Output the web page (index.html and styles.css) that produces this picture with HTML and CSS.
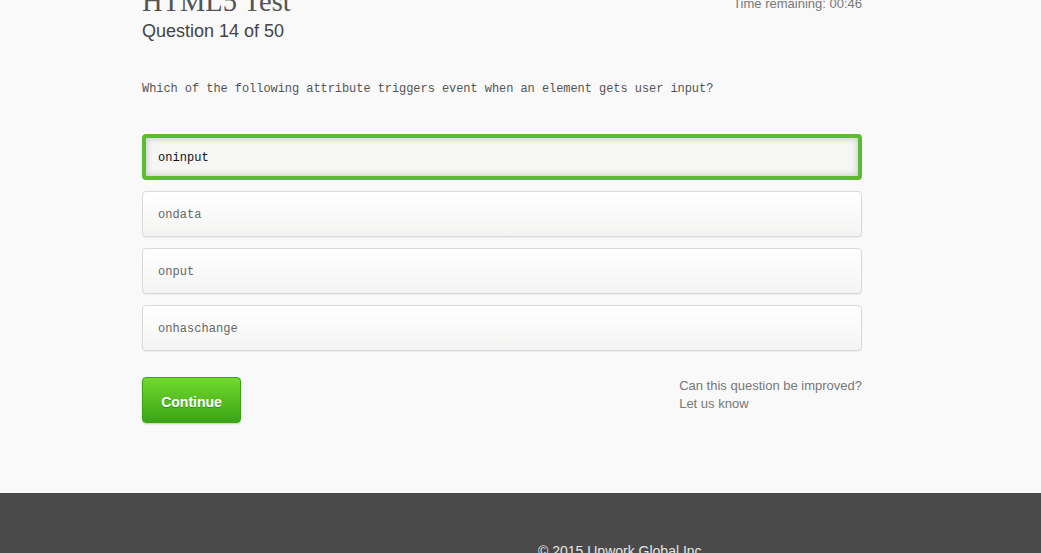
FILE: index.html
```html
<!DOCTYPE html>
<html>
<head>
<meta charset="utf-8">
<title>HTML5 Test</title>
<link rel="stylesheet" href="styles.css">
</head>
<body>
<main class="page">
  <header class="test-header">
    <div class="titles">
      <h1 class="test-title">HTML5 Test</h1>
      <div class="test-sub">Question 14 of 50</div>
    </div>
    <div class="timer">Time remaining: 00:46</div>
  </header>
  <p class="question">Which of the following attribute triggers event when an element gets user input?</p>
  <div class="options">
    <div class="option selected">oninput</div>
    <div class="option">ondata</div>
    <div class="option">onput</div>
    <div class="option">onhaschange</div>
  </div>
  <div class="actions">
    <button class="btn-continue">Continue</button>
    <div class="feedback">
      <div>Can this question be improved?</div>
      <div>Let us know</div>
    </div>
  </div>
</main>
<footer class="site-footer">
  <div class="copy">© 2015 Upwork Global Inc.</div>
</footer>
</body>
</html>
```
FILE: styles.css
```css
html, body {
  margin: 0;
  padding: 0;
  background: #f9f9f9;
  height: 100%;
  overflow: hidden;
}
body {
  font-family: "Liberation Sans", Arial, sans-serif;
}
.page {
  width: 720px;
  margin-left: 142px;
}
.test-header {
  display: flex;
  justify-content: space-between;
  align-items: flex-start;
}
.test-title {
  margin: -14px 0 0 0;
  font-family: "Liberation Serif", "Times New Roman", serif;
  font-weight: normal;
  font-size: 28.5px;
  line-height: 32px;
  color: #555;
}
.test-sub {
  margin-top: 2px;
  font-size: 18px;
  line-height: 22px;
  color: #444;
}
.timer {
  margin-top: -5px;
  font-size: 13px;
  line-height: 18px;
  color: #777;
}
.question {
  margin: 39px 0 0 0;
  font-family: "Liberation Mono", "Courier New", monospace;
  font-size: 12px;
  letter-spacing: -0.06px;
  line-height: 16px;
  color: #555;
}
.options {
  margin-top: 37px;
  display: flex;
  flex-direction: column;
  gap: 11px;
}
.option {
  box-sizing: border-box;
  height: 46px;
  padding: 1px 15px 0;
  display: flex;
  align-items: center;
  border: 1px solid #d6d9de;
  border-radius: 4px;
  background: linear-gradient(#ffffff, #f4f4f3);
  box-shadow: 0 1px 1px rgba(0,0,0,0.06);
  font-family: "Liberation Mono", "Courier New", monospace;
  font-size: 12px;
  letter-spacing: 0.05px;
  color: #666;
}
.option.selected {
  border: 4px solid #5dbb33;
  padding: 1px 12px 0;
  color: #111;
  background: #f6f6f5;
  box-shadow: inset 0 0 7px rgba(0,0,0,0.22);
}
.actions {
  margin-top: 26px;
  display: flex;
  justify-content: space-between;
  align-items: flex-start;
}
.btn-continue {
  width: 99px;
  height: 46px;
  border: 1px solid #3d9f1a;
  border-radius: 4px;
  background: linear-gradient(#72d92f, #3ba414);
  box-shadow: 0 1px 2px rgba(0,0,0,0.2);
  color: #fff;
  font-family: "Liberation Sans", Arial, sans-serif;
  font-weight: bold;
  font-size: 14px;
  text-shadow: 0 1px 0 rgba(0,60,0,0.35);
  padding: 3px 0 0;
}
.feedback {
  white-space: nowrap;
  margin-top: 0;
  font-size: 13px;
  line-height: 18px;
  color: #777;
}
.site-footer {
  margin-top: 70px;
  background: #4a4a4a;
  height: 200px;
  padding-top: 50px;
  box-sizing: border-box;
}
.copy {
  margin-left: 538px;
  font-size: 14px;
  color: #e6e6e6;
}
```
